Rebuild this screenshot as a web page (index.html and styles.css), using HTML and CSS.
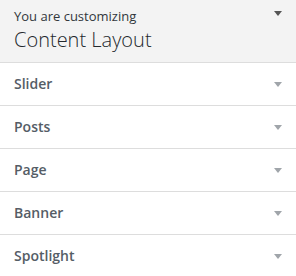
FILE: index.html
```html
<!DOCTYPE html>
<html lang="en">
<head>
  <meta charset="UTF-8">
  <title>Customizer</title>
  <link rel="stylesheet" href="styles.css">
</head>
<body>

  <div class="info">
    <span class="info-label">You are customizing</span>
    <span class="info-title">Content Layout</span>
    <span class="arrow arrow-dark"></span>
  </div>

  <ul class="sections">
    <li class="section">Slider <span class="arrow"></span></li>
    <li class="section">Posts <span class="arrow"></span></li>
    <li class="section">Page <span class="arrow"></span></li>
    <li class="section">Banner <span class="arrow"></span></li>
    <li class="section">Spotlight <span class="arrow"></span></li>
  </ul>

</body>
</html>
```

FILE: styles.css
```css
body {
  margin: 0;
  font-family: "Open Sans", sans-serif;
  background-color: #fff;
  color: #555d66;
}

.info {
  position: relative;
  background-color: #f3f3f3;
  border-bottom: 1px solid #ddd;
  padding: 7px 14px 10px;
  height: 45px;
}

.info-label {
  display: block;
  font-size: 13px;
  line-height: 18px;
  color: #32373c;
}

.info-title {
  display: block;
  font-size: 20px;
  font-weight: 300;
  line-height: 29px;
  color: #23282d;
}

.sections {
  list-style: none;
  margin: 0;
  padding: 0;
}

.section {
  position: relative;
  font-size: 14px;
  font-weight: 600;
  line-height: 21px;
  padding: 10px 10px 11px 14px;
  border-bottom: 1px solid #ddd;
  color: #555d66;
}

.arrow {
  position: absolute;
  right: 14px;
  top: 19px;
  width: 0;
  height: 0;
  border-left: 4px solid transparent;
  border-right: 4px solid transparent;
  border-top: 5px solid #a0a5aa;
}

.arrow-dark {
  top: 11px;
  border-top-color: #555;
}
```
